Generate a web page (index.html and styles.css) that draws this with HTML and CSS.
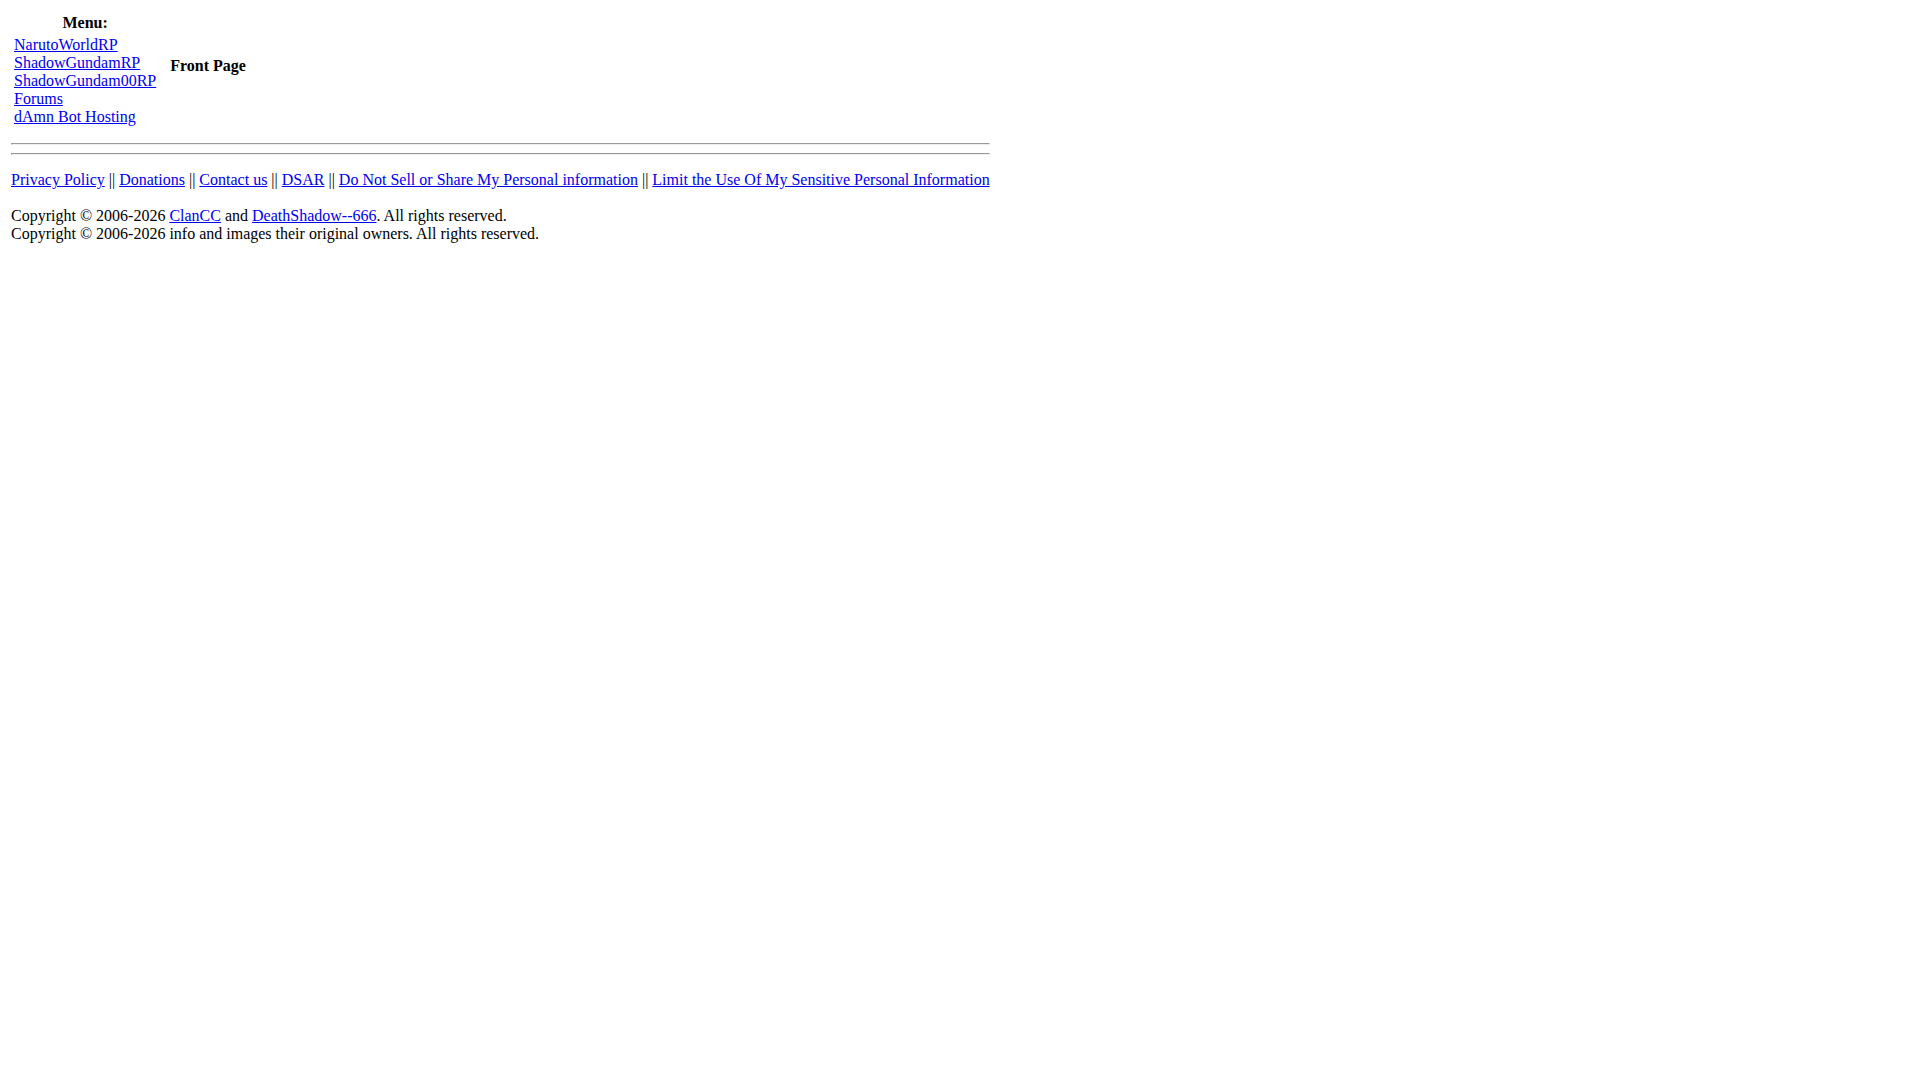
FILE: index.html
```html
<!DOCTYPE html>
<html>
<head>
<meta charset="utf-8">
<title>Front Page</title>
<link rel="stylesheet" href="styles.css">
</head>
<body>
<div class="page">
  <div class="top">
    <div class="menu">
      <div class="menu-title">Menu:</div>
      <div class="menu-links">
        <a href="#">NarutoWorldRP</a>
        <a href="#">ShadowGundamRP</a>
        <a href="#">ShadowGundam00RP</a>
        <a href="#">Forums</a>
        <a href="#">dAmn Bot Hosting</a>
      </div>
    </div>
    <div class="main"><span class="main-title">Front Page</span></div>
  </div>
  <hr class="rule">
  <hr class="rule">
  <p class="links">
    <a href="#">Privacy Policy</a> || <a href="#">Donations</a> || <a href="#">Contact us</a> || <a href="#">DSAR</a> || <a href="#">Do Not Sell or Share My Personal information</a> || <a href="#">Limit the Use Of My Sensitive Personal Information</a>
  </p>
  <div class="copy">
    Copyright © 2006-2026 <a href="#">ClanCC</a> and <a href="#">DeathShadow--666</a>. All rights reserved.<br>
    Copyright © 2006-2026 info and images their original owners. All rights reserved.
  </div>
</div>
</body>
</html>
```

FILE: styles.css
```css
body {
  margin: 8px;
  font-family: "Liberation Serif", "Times New Roman", serif;
  font-size: 16px;
  color: #000;
  background: #fff;
}

a {
  color: #0000ee;
}

.page {
  display: inline-block;
  padding: 3px;
}

.top {
  display: flex;
  align-items: flex-start;
}

.menu {
  padding: 3px 3px 3px 3px;
}

.menu-title {
  text-align: center;
  font-weight: bold;
}

.menu-links {
  margin-top: 4px;
  display: flex;
  flex-direction: column;
  align-items: flex-start;
}

.main {
  margin-left: 11px;
  padding-top: 46px;
}

.main-title {
  font-weight: bold;
}

.rule {
  margin: 14px 0 8px 0;
  border-color: #9a9a9a #eeeeee #eeeeee #9a9a9a;
  border-style: solid;
  border-width: 1px;
  height: 0;
}

.rule + .rule {
  margin-top: 8px;
}

.links {
  margin: 16px 0 18px 0;
  white-space: nowrap;
}

.copy {
  white-space: nowrap;
}
```
